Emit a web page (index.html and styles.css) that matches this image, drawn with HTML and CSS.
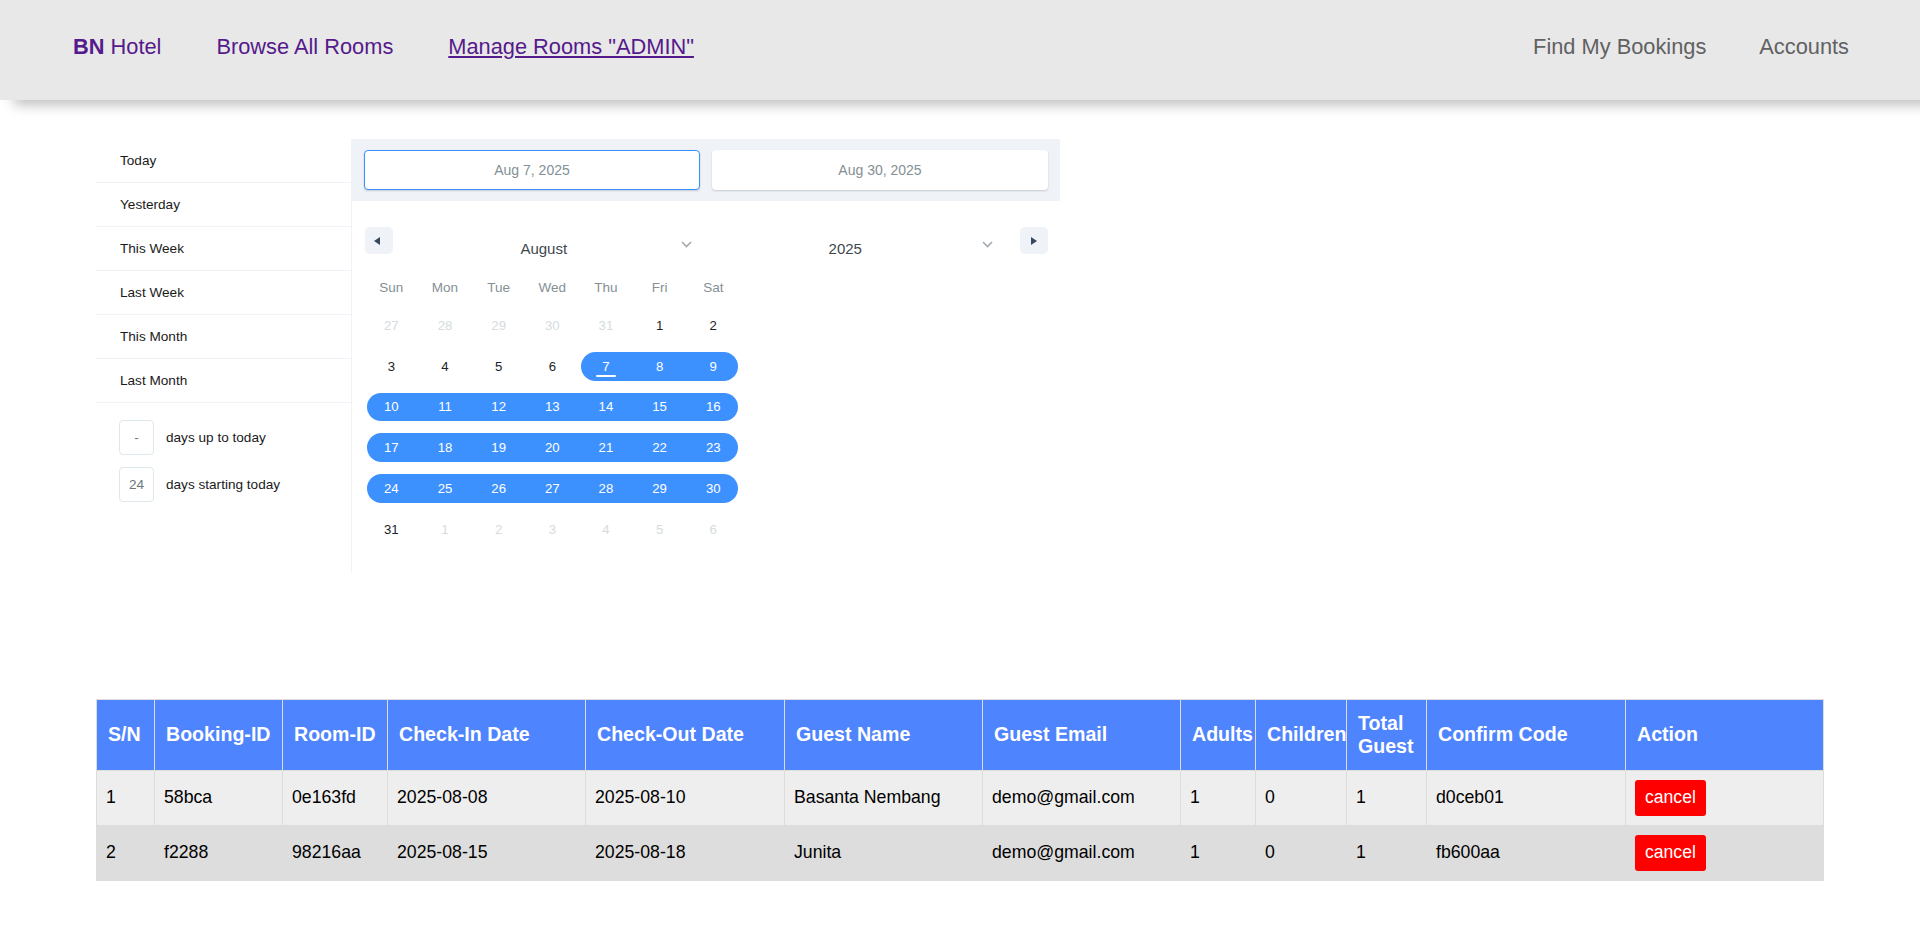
FILE: index.html
```html
<!DOCTYPE html>
<html lang="en">
<head>
<meta charset="utf-8">
<title>BN Hotel - Manage Bookings</title>
<link rel="stylesheet" href="styles.css">
</head>
<body>
<nav class="navbar">
  <div class="nav-left">
    <a class="nav-link" href="#"><b>BN</b> Hotel</a>
    <a class="nav-link" href="#">Browse All Rooms</a>
    <a class="nav-link active" href="#">Manage Rooms "ADMIN"</a>
  </div>
  <div class="nav-right">
    <a class="nav-link muted" href="#">Find My Bookings</a>
    <a class="nav-link muted" href="#">Accounts</a>
  </div>
</nav>

<main class="container">
  <div class="picker">
    <aside class="ranges">
      <div class="static-ranges">
        <div class="static-range">Today</div>
        <div class="static-range">Yesterday</div>
        <div class="static-range">This Week</div>
        <div class="static-range">Last Week</div>
        <div class="static-range">This Month</div>
        <div class="static-range">Last Month</div>
      </div>
      <div class="input-ranges">
        <div class="input-range"><span class="range-input">-</span><span class="range-label">days up to today</span></div>
        <div class="input-range"><span class="range-input">24</span><span class="range-label">days starting today</span></div>
      </div>
    </aside>
    <div class="calendar">
      <div class="date-display">
        <div class="date-item active">Aug 7, 2025</div>
        <div class="date-item">Aug 30, 2025</div>
      </div>
      <div class="month-year">
        <button class="nav-btn prev" type="button"><i class="tri tri-left"></i></button>
        <div class="pickers">
          <div class="select">August<svg class="chev" width="11" height="7" viewBox="0 0 11 7"><path d="M1 1l4.5 4.5L10 1" fill="none" stroke="#a3aaaf" stroke-width="1.6"/></svg></div>
          <div class="select">2025<svg class="chev" width="11" height="7" viewBox="0 0 11 7"><path d="M1 1l4.5 4.5L10 1" fill="none" stroke="#a3aaaf" stroke-width="1.6"/></svg></div>
        </div>
        <button class="nav-btn next" type="button"><i class="tri tri-right"></i></button>
      </div>
      <div class="month">
        <div class="weekdays">
          <span>Sun</span><span>Mon</span><span>Tue</span><span>Wed</span><span>Thu</span><span>Fri</span><span>Sat</span>
        </div>
        <div class="days">
          <div class="day passive"><span>27</span></div>
          <div class="day passive"><span>28</span></div>
          <div class="day passive"><span>29</span></div>
          <div class="day passive"><span>30</span></div>
          <div class="day passive"><span>31</span></div>
          <div class="day"><span>1</span></div>
          <div class="day"><span>2</span></div>

          <div class="day"><span>3</span></div>
          <div class="day"><span>4</span></div>
          <div class="day"><span>5</span></div>
          <div class="day"><span>6</span></div>
          <div class="day in rs today"><span>7</span></div>
          <div class="day in"><span>8</span></div>
          <div class="day in re"><span>9</span></div>

          <div class="day in rs"><span>10</span></div>
          <div class="day in"><span>11</span></div>
          <div class="day in"><span>12</span></div>
          <div class="day in"><span>13</span></div>
          <div class="day in"><span>14</span></div>
          <div class="day in"><span>15</span></div>
          <div class="day in re"><span>16</span></div>

          <div class="day in rs"><span>17</span></div>
          <div class="day in"><span>18</span></div>
          <div class="day in"><span>19</span></div>
          <div class="day in"><span>20</span></div>
          <div class="day in"><span>21</span></div>
          <div class="day in"><span>22</span></div>
          <div class="day in re"><span>23</span></div>

          <div class="day in rs"><span>24</span></div>
          <div class="day in"><span>25</span></div>
          <div class="day in"><span>26</span></div>
          <div class="day in"><span>27</span></div>
          <div class="day in"><span>28</span></div>
          <div class="day in"><span>29</span></div>
          <div class="day in re"><span>30</span></div>

          <div class="day"><span>31</span></div>
          <div class="day passive"><span>1</span></div>
          <div class="day passive"><span>2</span></div>
          <div class="day passive"><span>3</span></div>
          <div class="day passive"><span>4</span></div>
          <div class="day passive"><span>5</span></div>
          <div class="day passive"><span>6</span></div>
        </div>
      </div>
    </div>
  </div>

  <table class="bookings">
    <colgroup>
      <col class="c-sn"><col class="c-bid"><col class="c-rid"><col class="c-date"><col class="c-date2">
      <col class="c-name"><col class="c-email"><col class="c-adults"><col class="c-children"><col class="c-total">
      <col class="c-code"><col class="c-action">
    </colgroup>
    <thead>
      <tr>
        <th>S/N</th><th>Booking-ID</th><th>Room-ID</th><th>Check-In Date</th><th>Check-Out Date</th>
        <th>Guest Name</th><th>Guest Email</th><th>Adults</th><th>Children</th><th>Total Guest</th>
        <th>Confirm Code</th><th>Action</th>
      </tr>
    </thead>
    <tbody>
      <tr class="row-odd">
        <td>1</td><td>58bca</td><td>0e163fd</td><td>2025-08-08</td><td>2025-08-10</td>
        <td>Basanta Nembang</td><td>demo@gmail.com</td><td>1</td><td>0</td><td>1</td>
        <td>d0ceb01</td><td><button class="btn-cancel" type="button">cancel</button></td>
      </tr>
      <tr class="row-even">
        <td>2</td><td>f2288</td><td>98216aa</td><td>2025-08-15</td><td>2025-08-18</td>
        <td>Junita</td><td>demo@gmail.com</td><td>1</td><td>0</td><td>1</td>
        <td>fb600aa</td><td><button class="btn-cancel" type="button">cancel</button></td>
      </tr>
    </tbody>
  </table>
</main>
</body>
</html>
```

FILE: styles.css
```css
* { box-sizing: border-box; }

body {
  margin: 0;
  background: #ffffff;
  font-family: "Liberation Sans", Arial, sans-serif;
}

/* ---------- navbar ---------- */
.navbar {
  position: relative;
  height: 100px;
  padding: 34px 71px 0 73px;
  display: flex;
  justify-content: space-between;
  align-items: flex-start;
  background: #e8e8e8;
  box-shadow: 14px 5px 12px rgba(0, 0, 0, 0.25);
}

.nav-left { display: flex; gap: 55px; }
.nav-right { display: flex; gap: 53px; }

.nav-link {
  font-size: 21.8px;
  line-height: 25px;
  color: #551a8b;
  text-decoration: none;
}
.nav-link.active { text-decoration: underline; }
.nav-link.muted { color: #616161; }

/* ---------- container ---------- */
.container {
  width: 90%;
  margin: 39px auto 0;
}

/* ---------- date range picker ---------- */
.picker {
  display: flex;
  width: max-content;
  color: #000;
  font-size: 13.6px;
}

.ranges {
  width: 256px;
  border-right: 1px solid #eff2f7;
}

.static-range {
  height: 44px;
  line-height: 43px;
  padding-left: 24px;
  border-bottom: 1px solid #eff2f7;
  color: #1a1a1a;
}

.input-ranges { padding: 11px 0; }

.input-range {
  display: flex;
  align-items: center;
  padding: 6px 24px 6px 23px;
}

.range-input {
  width: 35px;
  height: 35px;
  border: 1px solid #dee7eb;
  border-radius: 4px;
  text-align: center;
  line-height: 33px;
  color: #6c767a;
  margin-right: 12px;
}

.range-label { color: #1a1a1a; }

.calendar {
  width: 708px;
  display: flex;
  flex-direction: column;
}

.date-display {
  display: flex;
  gap: 12px;
  padding: 11px 12px;
  background: #eff2f7;
}

.date-item {
  flex: 1;
  height: 40px;
  border: 1px solid transparent;
  border-radius: 4px;
  background: #fff;
  box-shadow: 0 1px 2px 0 rgba(35, 57, 66, 0.21);
  text-align: center;
  line-height: 38px;
  font-size: 14px;
  color: #849095;
}
.date-item.active { border-color: #3d91ff; }

.month-year {
  display: flex;
  align-items: flex-start;
  height: 68px;
  padding: 26px 12px 0 13px;
}

.nav-btn {
  width: 28px;
  height: 27px;
  padding: 0;
  border: 0;
  border-radius: 5px;
  background: #eff2f7;
  display: flex;
  align-items: center;
  justify-content: center;
}

.tri {
  display: block;
  width: 0;
  height: 0;
  border-style: solid;
}
.tri-left {
  border-width: 4.5px 6px 4.5px 0;
  border-color: transparent #34495e transparent transparent;
  transform: translateX(-2px);
}
.tri-right {
  border-width: 4.5px 0 4.5px 6px;
  border-color: transparent transparent transparent #34495e;
}

.pickers {
  flex: 1;
  display: flex;
  gap: 12px;
  padding: 0 18px;
}

.select {
  flex: 1;
  position: relative;
  padding: 13px 36px 0 12px;
  line-height: 17px;
  font-size: 15px;
  color: #3e484f;
  text-align: center;
}

.chev {
  position: absolute;
  right: 9px;
  top: 14px;
}

.month { padding: 0 12px 22px 12.5px; }

.weekdays {
  display: grid;
  grid-template-columns: repeat(7, 53.67px);
  height: 36px;
  line-height: 37px;
  text-align: center;
  font-size: 13.5px;
  color: #849095;
}

.days {
  display: grid;
  grid-template-columns: repeat(7, 53.67px);
  grid-auto-rows: 40.8px;
}

.day {
  position: relative;
  display: flex;
  align-items: center;
  justify-content: center;
  font-size: 13.2px;
  color: #1d2429;
}
.day span { position: relative; z-index: 1; }
.day.passive { color: #d5dce0; }
.day.in { color: #fff; }

.day.in::before {
  content: "";
  position: absolute;
  top: 6px;
  bottom: 6px;
  left: 0;
  right: 0;
  background: #3d91ff;
}
.day.rs::before {
  left: 2px;
  border-top-left-radius: 15px;
  border-bottom-left-radius: 15px;
}
.day.re::before {
  right: 2px;
  border-top-right-radius: 15px;
  border-bottom-right-radius: 15px;
}

.day.today::after {
  content: "";
  position: absolute;
  z-index: 1;
  bottom: 10px;
  left: 50%;
  width: 20px;
  height: 2px;
  margin-left: -10px;
  border-radius: 2px;
  background: #fff;
}

/* ---------- bookings table ---------- */
.bookings {
  width: 100%;
  margin-top: 127px;
  border-collapse: collapse;
  table-layout: fixed;
  border: 1px solid #ddd;
}

.c-sn { width: 58px; }
.c-bid { width: 128px; }
.c-rid { width: 105px; }
.c-date { width: 198px; }
.c-date2 { width: 199px; }
.c-name { width: 198px; }
.c-email { width: 198px; }
.c-adults { width: 75px; }
.c-children { width: 91px; }
.c-total { width: 80px; }
.c-code { width: 199px; }
.c-action { width: 198px; }

.bookings th {
  padding: 12px 0 12px 11px;
  border: 1px solid #ddd;
  background: #4f84ff;
  color: #fff;
  font-size: 19.6px;
  line-height: 23px;
  font-weight: bold;
  text-align: left;
}

.bookings td {
  padding: 9px 10px 9px 9px;
  border: 1px solid #ddd;
  font-size: 17.7px;
  color: #000;
}

.row-odd td { background: #eeeeee; }
.row-even td { background: #dddddd; }

.btn-cancel {
  height: 36px;
  padding: 0 10px;
  border: 0;
  border-radius: 3px;
  background: #ff0000;
  color: #fff;
  font-family: "Liberation Sans", Arial, sans-serif;
  font-size: 17.6px;
}
```
